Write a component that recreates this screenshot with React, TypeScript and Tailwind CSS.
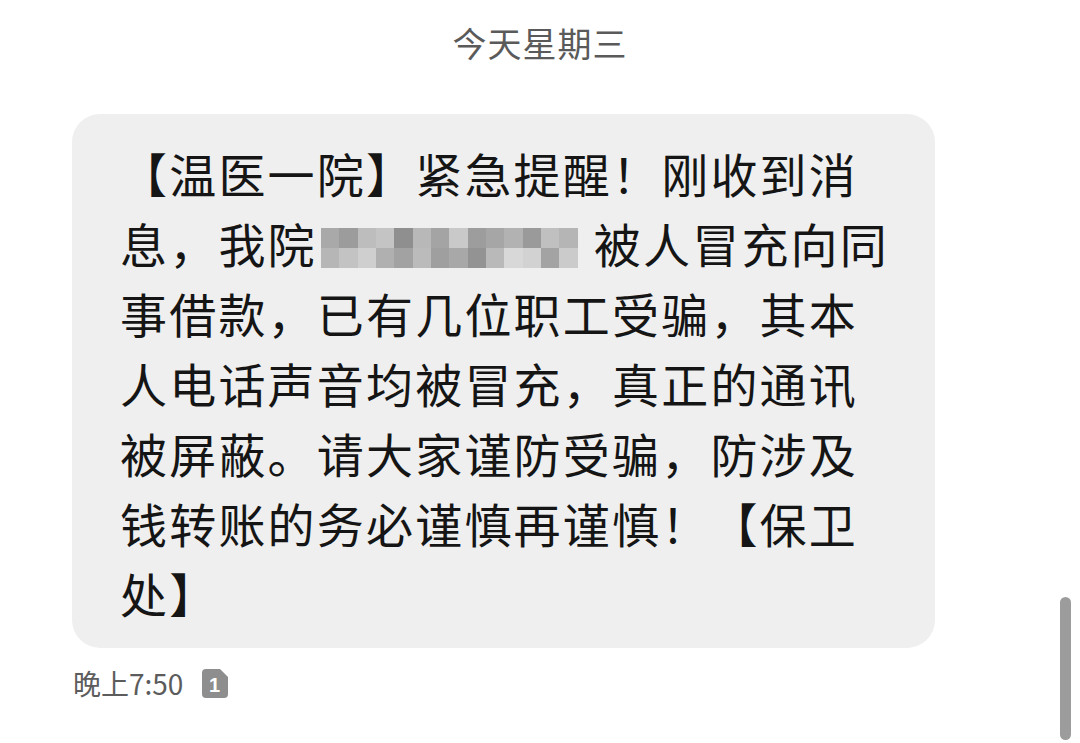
import React from 'react';

const cjk = { fontFamily: '"Noto Sans CJK SC", "Noto Sans", sans-serif' };

// pixelated mosaic cells covering the hidden name
const mosaic: string[][] = [
    ['#a9a9a9', '#9c9c9c', '#bdbdbd', '#c4c4c4', '#8f8f8f', '#b8b8b8', '#a4a4a4', '#c9c9c9', '#9d9d9d', '#a6a6a6', '#b2b2b2', '#9a9a9a', '#c0c0c0', '#b5b5b5'],
    ['#b6b6b6', '#c3c3c3', '#cfcfcf', '#b0b0b0', '#a2a2a2', '#bbbbbb', '#9f9f9f', '#a8a8a8', '#939393', '#b9b9b9', '#d8d8d8', '#d2d2d2', '#a3a3a3', '#cbcbcb'],
];

const Mosaic = () => (
    <span className="inline-flex flex-col align-middle ml-[4px] mr-[16px] w-[257px] h-[40px] relative -top-[2px] blur-[0.6px]">
        {mosaic.map((row, i) => (
            <span key={i} className="flex flex-1">
                {row.map((c, j) => (
                    <span key={j} className="flex-1" style={{ backgroundColor: c }} />
                ))}
            </span>
        ))}
    </span>
);

const lines: React.ReactNode[] = [
    '【温医一院】紧急提醒！刚收到消',
    <>息，我院<Mosaic />被人冒充向同</>,
    '事借款，已有几位职工受骗，其本',
    '人电话声音均被冒充，真正的通讯',
    '被屏蔽。请大家谨防受骗，防涉及',
    '钱转账的务必谨慎再谨慎！【保卫',
    '处】',
];

const SimBadge = () => (
    <svg width="26" height="29" viewBox="0 0 26 29" className="block">
        <path d="M4 0 H18 L26 8 V25 a4 4 0 0 1 -4 4 H4 a4 4 0 0 1 -4 -4 V4 a4 4 0 0 1 4 -4 Z" fill="#8e8e8e" />
        <text x="12.5" y="22.5" textAnchor="middle" fontSize="20" fontWeight="700" fill="#fff" fontFamily="Liberation Sans, sans-serif">1</text>
    </svg>
);

export default function App() {
    return (
        <div className="w-[1080px] h-[743px] bg-white relative overflow-hidden" style={cjk}>
            <div className="pt-[21px] h-[65px] text-center text-[34px] leading-[44px] text-[#5a5a5a] tracking-[1px]">
                今天星期三
            </div>

            <div className="mt-[49px] ml-[72px] w-[863px] h-[534px] rounded-[28px] bg-[#efefef] pl-[48px] pt-[24px]">
                {lines.map((l, i) => (
                    <div key={i} className="text-[47px] leading-[70px] h-[70px] text-[#151515] tracking-[2.2px] whitespace-nowrap">
                        {l}
                    </div>
                ))}
            </div>

            <div className="mt-[20px] ml-[73px] flex items-center gap-[19px] h-[30px]">
                <span className="text-[28px] leading-[30px] text-[#5c5c5c]">晚上7:50</span>
                <SimBadge />
            </div>

            <div className="absolute left-[1060px] top-[597px] w-[11px] h-[143px] rounded-full bg-[#9c9c9c]" />
        </div>
    );
}
